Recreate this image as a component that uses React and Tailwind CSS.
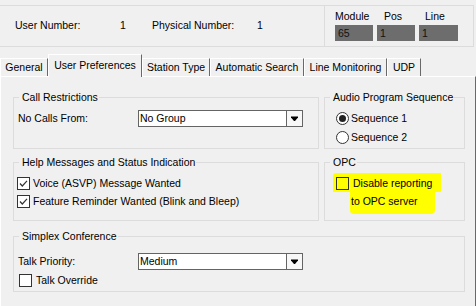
import React from 'react'

const FONT = { fontFamily: '"Liberation Sans", Arial, sans-serif' }

function Arrow() {
  return (
    <svg width="9" height="7" viewBox="0 0 9 7">
      <path d="M1 1.5h7v1l-3 3.5h-1l-3-3.5z" fill="#000" />
    </svg>
  )
}

function Select({ value }) {
  return (
    <div className="flex h-[17px] w-[165px] border border-[#646464] bg-white">
      <div className="flex-1 pl-[1px] leading-[15px]">{value}</div>
      <div className="flex w-[16px] items-center justify-center border-l border-[#646464] bg-[#f7f7f7]">
        <Arrow />
      </div>
    </div>
  )
}

function Check({ checked, yellow }) {
  return (
    <div className={`h-[13px] w-[13px] shrink-0 border border-[#333] ${yellow ? 'bg-[#ffff00]' : 'bg-white'}`}>
      {checked && (
        <svg width="11" height="11" viewBox="0 0 11 11">
          <path d="M2 5.5l2.3 2.5L9 2.8" fill="none" stroke="#333" strokeWidth="1.2" />
        </svg>
      )}
    </div>
  )
}

function Radio({ on }) {
  return (
    <div className="flex h-[13px] w-[13px] shrink-0 items-center justify-center rounded-full border border-[#333] bg-white">
      {on && <div className="h-[7px] w-[7px] rounded-full bg-[#222]" />}
    </div>
  )
}

function Group({ title, className, children }) {
  return (
    <div className={`relative border border-[#dcdcdc] ${className}`}>
      <span className="absolute left-[5px] top-[-7px] bg-[#f0f0f0] pl-[3px] pr-[1px] leading-[13px]">{title}</span>
      {children}
    </div>
  )
}

const tabs = [
  ['General', 'w-[48px]'],
  ['User Preferences', 'w-[94px]'],
  ['Station Type', 'w-[68px]'],
  ['Automatic Search', 'w-[94px]'],
  ['Line Monitoring', 'w-[83px]'],
  ['UDP', 'w-[34px]'],
]

export default function App() {
  return (
    <div className="h-[306px] w-[476px] overflow-hidden bg-[#f0f0f0] text-[10.5px] text-black" style={FONT}>
      {/* header */}
      <div className="mt-[5px] flex h-[42px] w-[474px] border-y border-r border-[#dcdcdc]">
        <div className="flex w-[324px] items-center pl-[15px]">
          <span className="w-[105px]">User Number:</span>
          <span className="w-[32px]">1</span>
          <span className="w-[105px]">Physical Number:</span>
          <span>1</span>
        </div>
        <div className="flex gap-[4px] border-l border-[#dcdcdc] pl-[10px] pt-[3px]">
          <div className="flex w-[38px] flex-col">
            <span className="h-[14px] leading-[14px]">Module</span>
            <div className="mt-[2px] h-[16px] bg-[#6d6d6d] pl-[3px] leading-[16px] text-[#111]">65</div>
          </div>
          <div className="flex w-[38px] flex-col">
            <span className="h-[14px] pl-[7px] leading-[14px]">Pos</span>
            <div className="mt-[2px] h-[16px] bg-[#6d6d6d] pl-[3px] leading-[16px] text-[#111]">1</div>
          </div>
          <div className="flex w-[39px] flex-col">
            <span className="h-[14px] pl-[6px] leading-[14px]">Line</span>
            <div className="mt-[2px] h-[16px] bg-[#6d6d6d] pl-[3px] leading-[16px] text-[#111]">1</div>
          </div>
        </div>
      </div>

      {/* tabs */}
      <div className="mt-[7px] flex h-[22px] items-end">
        {tabs.map(([name, w], i) =>
          i === 1 ? (
            <div
              key={name}
              className={`relative z-10 -mb-[1px] h-[23px] ${w} border-l border-t border-r border-l-white border-t-white border-r-[#696969] bg-[#f0f0f0] pt-[4px] text-center leading-[13px]`}
            >
              {name}
            </div>
          ) : (
            <div
              key={name}
              className={`h-[18px] ${w} border-l border-t border-r border-l-white border-t-white border-r-[#696969] text-center leading-[17px]`}
            >
              {name}
            </div>
          )
        )}
      </div>

      {/* tab page */}
      <div className="h-[240px] w-[476px] border border-l-white border-t-white border-r-[#696969] border-b-[#696969] pl-[12px] pt-[20px]">
        <div className="flex gap-[5px]">
          <Group title="Call Restrictions" className="h-[52px] w-[306px]">
            <div className="mt-[12px] flex items-center pl-[4px]">
              <span className="w-[120px]">No Calls From:</span>
              <Select value="No Group" />
            </div>
          </Group>
          <Group title="Audio Program Sequence" className="h-[52px] w-[141px]">
            <div className="mt-[14px] flex flex-col gap-[6px] pl-[11px]">
              <div className="flex items-center gap-[2px] leading-[13px]">
                <Radio on />
                <span>Sequence 1</span>
              </div>
              <div className="flex items-center gap-[2px] leading-[13px]">
                <Radio />
                <span>Sequence 2</span>
              </div>
            </div>
          </Group>
        </div>

        <div className="mt-[13px] flex gap-[5px]">
          <Group title="Help Messages and Status Indication" className="h-[59px] w-[306px]">
            <div className="mt-[14px] flex flex-col gap-[5px] pl-[3px]">
              <div className="flex items-center gap-[3px] leading-[13px]">
                <Check checked />
                <span>Voice (ASVP) Message Wanted</span>
              </div>
              <div className="flex items-center gap-[3px] leading-[13px]">
                <Check checked />
                <span>Feature Reminder Wanted (Blink and Bleep)</span>
              </div>
            </div>
          </Group>
          <Group title="OPC" className="h-[59px] w-[141px]">
            <div className="mt-[10px] flex pl-[8px]">
              <div className="flex flex-col">
                <div className="flex items-center rounded-tl-[3px] bg-[#ffff00] pl-[3px] pt-[4px] pb-[2px] leading-[13px]">
                  <Check yellow />
                  <span className="pl-[4px] pr-[9px]">Disable reporting</span>
                </div>
                <div className="ml-[17px] w-fit rounded-b-[4px] bg-[#ffff00] pl-[1px] pr-[17px] pt-[3px] pb-[6px] leading-[13px]">to OPC server</div>
              </div>
            </div>
          </Group>
        </div>

        <Group title="Simplex Conference" className="mt-[15px] h-[56px] w-[452px]">
          <div className="mt-[16px] flex items-center pl-[4px]">
            <span className="w-[120px]">Talk Priority:</span>
            <Select value="Medium" />
          </div>
          <div className="mt-[4px] flex items-center gap-[4px] pl-[5px] leading-[13px]">
            <Check />
            <span>Talk Override</span>
          </div>
        </Group>
      </div>
    </div>
  )
}
